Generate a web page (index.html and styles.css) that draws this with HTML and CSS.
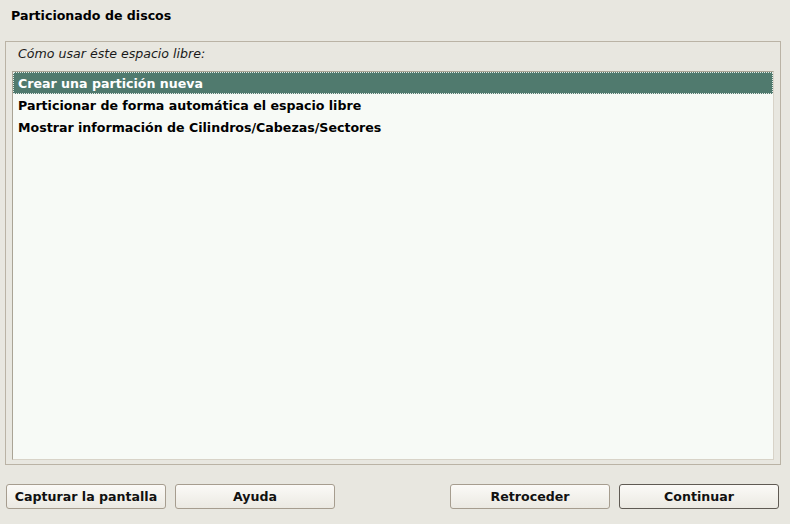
FILE: index.html
```html
<!DOCTYPE html>
<html lang="es">
<head>
<meta charset="utf-8">
<title>Particionado de discos</title>
<link rel="stylesheet" href="styles.css">
</head>
<body>
<div class="window">
  <h1 class="title">Particionado de discos</h1>
  <div class="frame">
    <div class="prompt">Cómo usar éste espacio libre:</div>
    <div class="list">
      <div class="item selected">Crear una partición nueva</div>
      <div class="item">Particionar de forma automática el espacio libre</div>
      <div class="item">Mostrar información de Cilindros/Cabezas/Sectores</div>
    </div>
  </div>
  <div class="buttons">
    <div class="group">
      <button class="btn">Capturar la pantalla</button>
      <button class="btn">Ayuda</button>
    </div>
    <div class="group">
      <button class="btn">Retroceder</button>
      <button class="btn default">Continuar</button>
    </div>
  </div>
</div>
</body>
</html>
```
FILE: styles.css
```css
html, body {
  margin: 0;
  padding: 0;
  background: #e8e7e0;
}
body {
  font-family: "DejaVu Sans", sans-serif;
  font-size: 12.6px;
  color: #000;
}
.window {
  width: 790px;
  height: 524px;
  display: flex;
  flex-direction: column;
  box-sizing: border-box;
}
.title {
  margin: 0;
  font-size: 12.6px;
  font-weight: bold;
  padding: 8px 0 0 11px;
  height: 41px;
  box-sizing: border-box;
  line-height: 16px;
  flex: none;
}
.frame {
  margin: 0 9px 0 5px;
  height: 424px;
  flex: none;
  box-sizing: border-box;
  border: 1px solid #bab3a5;
  display: flex;
  flex-direction: column;
}
.prompt {
  font-style: italic;
  font-size: 12.6px;
  padding: 4px 0 0 12px;
  height: 29px;
  flex: none;
  box-sizing: border-box;
  line-height: 16px;
  color: #1a1a1a;
}
.list {
  margin: 0 6px 0 6px;
  height: 389px;
  flex: none;
  box-sizing: border-box;
  border: 1px solid #aaa495;
  border-right-color: #d8d3c8;
  border-bottom-color: #d8d3c8;
  background: #f7faf6;
  padding: 0;
}
.item {
  height: 22px;
  line-height: 22px;
  padding: 1px 0 0 5px;
  font-weight: bold;
  white-space: nowrap;
  box-sizing: border-box;
}
.item.selected {
  background: #507a6e;
  color: #fff;
  outline: 1px dotted #e6ece8;
  outline-offset: -1px;
}
.buttons {
  display: flex;
  justify-content: space-between;
  padding: 19px 11px 0 6px;
}
.group {
  display: flex;
  gap: 9px;
}
.btn {
  width: 160px;
  height: 25px;
  box-sizing: border-box;
  font-family: "DejaVu Sans", sans-serif;
  font-size: 12.6px;
  font-weight: bold;
  color: #111;
  border: 1px solid #a69d8f;
  border-radius: 3px;
  background: linear-gradient(#fbfaf7, #ebe9e2);
  padding: 0;
}
.btn.default {
  border-color: #5f5a53;
}
```
